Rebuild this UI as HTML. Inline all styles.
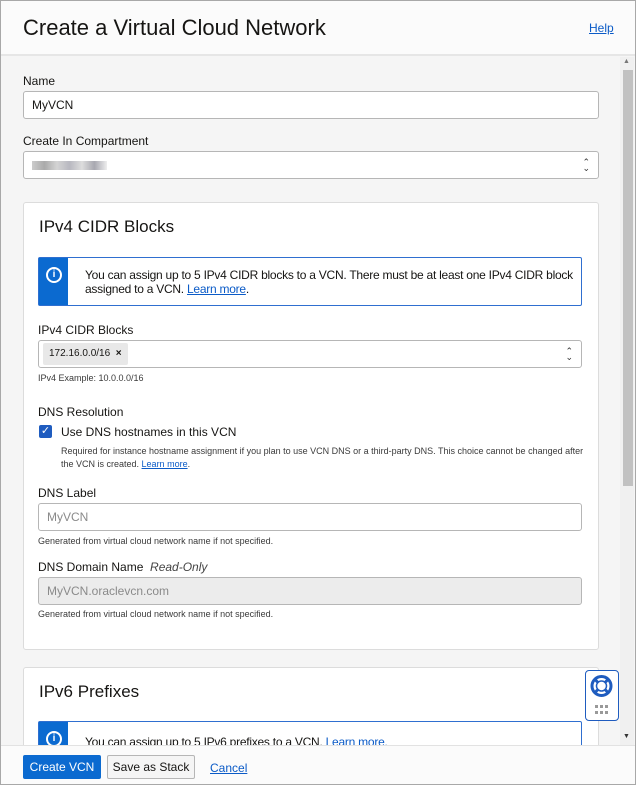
<!DOCTYPE html>
<html><head><meta charset="utf-8"><style>
*{box-sizing:border-box;margin:0;padding:0}
body{width:636px;height:785px;overflow:hidden;font-family:"Liberation Sans",Arial,sans-serif;color:#161513;background:#f5f5f5;position:relative}
.a{position:absolute}
.frame{position:absolute;left:0;top:0;width:636px;height:785px;border:1px solid #a8a8a8;pointer-events:none}
.lbl{position:absolute;font-size:12px;color:#161513}
.inp{position:absolute;background:#fff;border:1px solid #b6b6b6;border-radius:3px;font-size:12px;padding-left:8px;display:flex;align-items:center}
.help{position:absolute;font-size:9px;color:#3a3a3a}
.card{position:absolute;background:#fff;border:1px solid #dcdcdc;border-radius:3px}
.info{position:absolute;background:#fff;border:1px solid #2f6fd0;border-radius:2px}
.info .bar{position:absolute;left:0;top:0;bottom:0;width:29px;background:#0b6ad0}
.info .ic{position:absolute;left:7px;top:9px;width:16px;height:16px;border:2px solid #fff;border-radius:50%;color:#fff;font-size:10px;font-weight:bold;text-align:center;line-height:12px}
.lk{color:#0b5bc7;text-decoration:underline}
.arr{position:absolute;right:8px;top:7px;font-size:9px;line-height:6px;text-align:center;color:#333}
</style></head><body>
<div class="a" style="left:0;top:0;width:636px;height:56px;background:#fbfbfb;border-bottom:2px solid #e6e6e6"></div>
<div class="a" style="left:23px;top:15px;font-size:22px;color:#161513">Create a Virtual Cloud Network</div>
<div class="a lk" style="left:589px;top:21px;font-size:12px">Help</div>

<div class="lbl" style="left:23px;top:74px">Name</div>
<div class="inp" style="left:23px;top:91px;width:576px;height:28px">MyVCN</div>
<div class="lbl" style="left:23px;top:134px">Create In Compartment</div>
<div class="inp" style="left:23px;top:151px;width:576px;height:28px"><div style="width:75px;height:9px;background:linear-gradient(90deg,#ccc,#aaa,#d4d4d4,#b8b8c0,#ddd,#a8a8b0,#eee)"></div><div class="arr">⌃<br>⌄</div></div>

<div class="card" style="left:23px;top:202px;width:576px;height:448px"></div>
<div class="a" style="left:39px;top:217px;font-size:17px">IPv4 CIDR Blocks</div>
<div class="info" style="left:38px;top:257px;width:544px;height:49px"><div class="bar"></div><div class="ic">i</div>
<div class="a" style="left:46px;top:10px;font-size:12px;line-height:14px;width:495px;letter-spacing:-0.25px">You can assign up to 5 IPv4 CIDR blocks to a VCN. There must be at least one IPv4 CIDR block assigned to a VCN. <span class="lk">Learn more</span>.</div></div>
<div class="lbl" style="left:38px;top:323px">IPv4 CIDR Blocks</div>
<div class="inp" style="left:38px;top:340px;width:544px;height:28px;padding-left:4px"><div style="background:#e8e8e8;border-radius:2px;font-size:10px;padding:5px 6px;height:22px">172.16.0.0/16 &nbsp;<b>×</b></div><div class="arr">⌃<br>⌄</div></div>
<div class="help" style="left:38px;top:373px">IPv4 Example: 10.0.0.0/16</div>
<div class="lbl" style="left:38px;top:405px">DNS Resolution</div>
<div class="a" style="left:39px;top:425px;width:13px;height:13px;background:#1f5cbf;border-radius:2px;color:#fff;font-size:11px;line-height:13px;text-align:center">✓</div>
<div class="lbl" style="left:61px;top:425px">Use DNS hostnames in this VCN</div>
<div class="help" style="left:61px;top:445px;line-height:13px;width:530px">Required for instance hostname assignment if you plan to use VCN DNS or a third-party DNS. This choice cannot be changed after the VCN is created. <span class="lk">Learn more</span>.</div>
<div class="lbl" style="left:38px;top:486px">DNS Label</div>
<div class="inp" style="left:38px;top:503px;width:544px;height:28px;color:#8a8a8a">MyVCN</div>
<div class="help" style="left:38px;top:536px">Generated from virtual cloud network name if not specified.</div>
<div class="lbl" style="left:38px;top:560px">DNS Domain Name &nbsp;<i style="color:#444">Read-Only</i></div>
<div class="inp" style="left:38px;top:577px;width:544px;height:28px;background:#ececec;color:#8a8a8a">MyVCN.oraclevcn.com</div>
<div class="help" style="left:38px;top:609px">Generated from virtual cloud network name if not specified.</div>

<div class="card" style="left:23px;top:667px;width:576px;height:100px"></div>
<div class="a" style="left:39px;top:682px;font-size:17px">IPv6 Prefixes</div>
<div class="info" style="left:38px;top:721px;width:544px;height:40px"><div class="bar"></div><div class="ic">i</div>
<div class="a" style="left:46px;top:13px;font-size:12px;letter-spacing:-0.25px">You can assign up to 5 IPv6 prefixes to a VCN. <span style="color:#0b5bc7">Learn more.</span></div></div>

<div class="a" style="left:620px;top:57px;width:14px;height:688px;background:#f0f0f0"></div>
<div class="a" style="left:623px;top:70px;width:10px;height:416px;background:#c1c1c1"></div>
<div class="a" style="left:623px;top:58px;font-size:7px;color:#777">▲</div>
<div class="a" style="left:623px;top:733px;font-size:7px;color:#333">▼</div>

<div class="a" style="left:585px;top:670px;width:34px;height:51px;background:#fff;border:1.5px solid #1f5cbf;border-radius:4px">
<svg width="31" height="48" style="position:absolute;left:0;top:0"><circle cx="15.5" cy="15" r="9.5" fill="none" stroke="#1f5cbf" stroke-width="3"/><circle cx="15.5" cy="15" r="5" fill="#fff" stroke="#1f5cbf" stroke-width="1.5"/><g stroke="#1f5cbf" stroke-width="3"><line x1="9" y1="8.5" x2="12" y2="11.5"/><line x1="22" y1="8.5" x2="19" y2="11.5"/><line x1="9" y1="21.5" x2="12" y2="18.5"/><line x1="22" y1="21.5" x2="19" y2="18.5"/></g><g fill="#999"><rect x="9" y="34" width="3" height="3"/><rect x="14" y="34" width="3" height="3"/><rect x="19" y="34" width="3" height="3"/><rect x="9" y="40" width="3" height="3"/><rect x="14" y="40" width="3" height="3"/><rect x="19" y="40" width="3" height="3"/></g></svg></div>

<div class="a" style="left:0;top:745px;width:636px;height:40px;background:#fbfbfb;border-top:1px solid #e2e2e2"></div>
<div class="a" style="left:23px;top:755px;width:78px;height:24px;background:#0b6ad0;border-radius:2px;color:#fff;font-size:12px;text-align:center;line-height:24px">Create VCN</div>
<div class="a" style="left:107px;top:755px;width:88px;height:24px;background:#f5f5f5;border:1px solid #b6b6b6;border-radius:2px;font-size:12px;text-align:center;line-height:22px">Save as Stack</div>
<div class="a lk" style="left:210px;top:761px;font-size:12px">Cancel</div>
<div class="frame"></div>
</body></html>
